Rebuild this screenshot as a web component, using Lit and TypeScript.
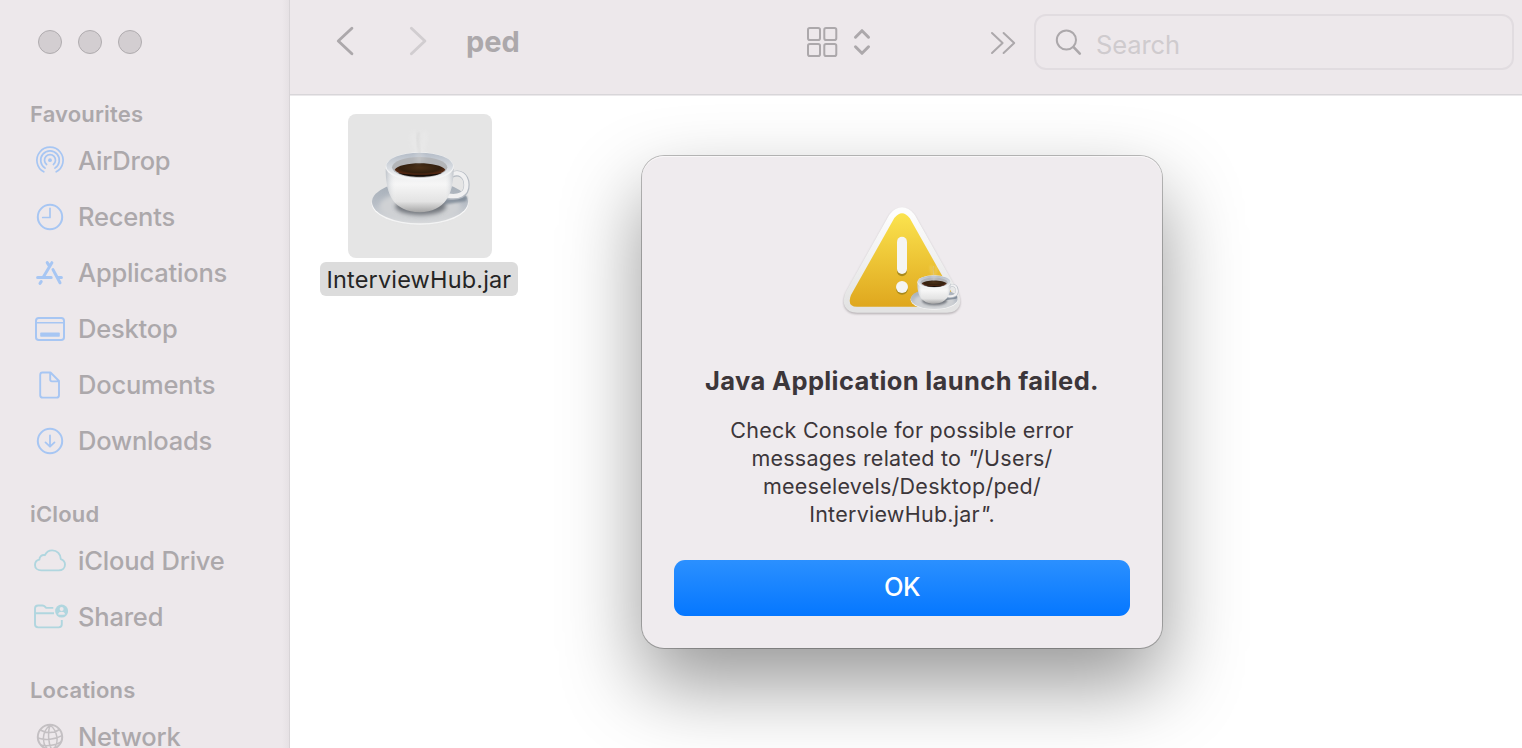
import { LitElement, html, css, svg } from "lit";
import { customElement } from "lit/decorators.js";

const cup = () => svg`
  <defs>
    <linearGradient id="saucer" x1="0" y1="0" x2="0" y2="1"><stop offset="0" stop-color="#a3acb6"/><stop offset=".55" stop-color="#b8bec6"/><stop offset="1" stop-color="#dcdddf"/></linearGradient>
    <linearGradient id="body" x1="0" y1="0" x2="0" y2="1"><stop offset="0" stop-color="#e6e7e9"/><stop offset=".35" stop-color="#f6f6f6"/><stop offset=".75" stop-color="#e3e3e3"/><stop offset="1" stop-color="#a5a5a5"/></linearGradient>
    <linearGradient id="side" x1="0" y1="0" x2="1" y2="0"><stop offset="0" stop-color="#8d97a3" stop-opacity=".45"/><stop offset=".16" stop-color="#fff" stop-opacity="0"/><stop offset=".86" stop-color="#fff" stop-opacity="0"/><stop offset="1" stop-color="#8d97a3" stop-opacity=".45"/></linearGradient>
    <linearGradient id="rim" x1="0" y1="0" x2="0" y2="1"><stop offset="0" stop-color="#b4bcc7"/><stop offset=".6" stop-color="#d9dde2"/><stop offset="1" stop-color="#fafafa"/></linearGradient>
    <radialGradient id="coffee" cx=".5" cy=".35" r=".55"><stop offset="0" stop-color="#4b3017"/><stop offset=".7" stop-color="#33200f"/><stop offset="1" stop-color="#5a2a14"/></radialGradient>
    <filter id="soft" x="-50%" y="-50%" width="200%" height="200%"><feGaussianBlur stdDeviation="6"/></filter>
    <filter id="softer" x="-50%" y="-50%" width="200%" height="200%"><feGaussianBlur stdDeviation="3"/></filter>
  </defs>
  <ellipse cx="330" cy="310" rx="145" ry="64" fill="#fafafa"/>
  <ellipse cx="330" cy="306" rx="144" ry="64" fill="url(#saucer)"/>
  <ellipse cx="330" cy="319" rx="122" ry="46" fill="#cfd1d4" filter="url(#soft)"/>
  <path d="M340 302L470 288Q474 298 466 304L400 314Z" fill="#75818f" opacity=".75" filter="url(#softer)"/>
  <ellipse cx="332" cy="319" rx="76" ry="26" fill="#5d6269" opacity=".8" filter="url(#soft)"/>
  <path d="M424 225C448 213 469 226 470 254C471 286 444 294 414 289" fill="none" stroke="#b4bac2" stroke-width="18"/>
  <path d="M424 224C448 212 468 226 469 254C470 284 444 292 414 287" fill="none" stroke="#f0f0f1" stroke-width="13"/>
  <path d="M227 207C227 285 250 334 329 337C406 334 430 285 431 207Z" fill="url(#body)"/>
  <path d="M227 207C227 285 250 334 329 337C406 334 430 285 431 207Z" fill="url(#side)"/>
  <ellipse cx="329" cy="200" rx="102" ry="43" fill="#f3f4f5"/>
  <ellipse cx="329" cy="198" rx="100" ry="40" fill="url(#rim)"/>
  <ellipse cx="329" cy="202" rx="83" ry="31" fill="#b3b5b8"/>
  <path d="M254 209C268 183 390 183 406 209C390 235 270 235 254 209Z" fill="url(#coffee)"/>
  <path d="M264 218C300 226 360 226 396 218C370 234 290 234 264 218Z" fill="#140d08"/>
  <g fill="none" stroke="#fff" opacity=".16" filter="url(#soft)"><path d="M312 100C300 125 330 145 322 186" stroke-width="14"/><path d="M342 100C352 125 325 145 338 178" stroke-width="14"/></g>
  <path d="M325 100C316 128 334 148 328 186" fill="none" stroke="#cccccc" stroke-width="6" opacity=".4" filter="url(#softer)"/>`;

const icons: Record<string, unknown> = {
  airdrop: svg`<g transform="translate(18 17.2)"><circle r="1.9" fill="currentColor" stroke="none"/><path d="M-6.2 11.6A13.1 13.1 0 1 1 6.2 11.6M-4.9 7.9A9.3 9.3 0 1 1 4.9 7.9M-3.4 4.3A5.5 5.5 0 1 1 3.4 4.3" stroke-width="1.7"/></g>`,
  recents: svg`<circle cx="18" cy="18" r="12.2"/><path d="M18 9.3V18.5H10.7" stroke-width="1.7"/>`,
  applications: svg`<path d="M19.9 7.7L11.2 22.2M15.2 7.6L17.6 11.4M21 14.6L28 27.8M5.6 22.5H19.2M25.6 22.5H29.4M9.2 26.6L8 28.4" stroke-width="3"/>`,
  desktop: svg`<rect x="4" y="7" width="28" height="22" rx="2.8"/><path d="M4 11.8H32" stroke-width="1.6"/><rect x="8.2" y="21.6" width="19.6" height="4.2" rx=".8" fill="currentColor" stroke="none"/>`,
  documents: svg`<path d="M10.5 5.5H18.5L27 14V28.2Q27 30.6 24.6 30.6H10.8Q8.2 30.6 8.2 28.2V7.9Q8.2 5.5 10.5 5.5ZM18.2 6V12.6Q18.2 14.4 20 14.4H26.6" stroke-width="1.9"/>`,
  downloads: svg`<circle cx="18" cy="18" r="12.2"/><path d="M18 12.5V23.3M13.5 19.4L18 23.7L22.5 19.4" stroke-width="1.8"/>`,
  cloud: svg`<path d="M9.4 27.4C5.6 27.4 3 25.1 3 21.9C3 19.2 4.8 17.1 7.4 16.6C7.3 13.6 10 11.4 12.9 12.2C14.3 9.2 17 7.4 20.2 7.4C25.2 7.4 28.7 11.2 28.8 16.1C31.3 16.9 33 19 33 21.6C33 25 30.4 27.4 26.8 27.4Z" stroke-width="1.9"/>`,
  shared: svg`<path d="M21.3 8.9H14.4L12.2 7.1Q11.4 6.5 10.2 6.5H6.2Q3 6.5 3 9.5V25.3Q3 28.4 6.2 28.4H26.6Q29.8 28.4 29.8 25.3V20.9M3 14.2H22" stroke-width="1.9" stroke-linecap="butt"/><circle cx="29.6" cy="12.1" r="6.5" fill="currentColor" stroke="none"/><circle cx="29.6" cy="10.1" r="2" fill="#ede8eb" stroke="none"/><path d="M25.9 15.2Q26.8 12.8 29.6 12.8T33.3 15.2Q29.6 16.4 25.9 15.2Z" fill="#ede8eb" stroke="none"/>`,
  network: svg`<circle cx="18" cy="18" r="12.2"/><path d="M18 6C9.7 13 9.7 24 15.5 30M18 6C15.5 14 16.5 25 19.5 30M18 6C26 12 27 24 22 29.5M8.3 11C14 14.5 22 14.5 27.5 10.4M6 19C13 21.5 23 20.5 30 16.6M9 26.2C15 27.2 24 26.5 28.5 23" stroke-width="1.5"/>`,
};

const sections = [
  { title: "Favourites", tint: "blue", items: [["airdrop", "AirDrop"], ["recents", "Recents"], ["applications", "Applications"], ["desktop", "Desktop"], ["documents", "Documents"], ["downloads", "Downloads"]] },
  { title: "iCloud", tint: "teal", items: [["cloud", "iCloud Drive"], ["shared", "Shared"]] },
  { title: "Locations", tint: "grey", items: [["network", "Network"]] },
];

@customElement("app-root")
export class AppRoot extends LitElement {
  static styles = css`
    :host { display: grid; grid-template-columns: 290px 1fr; position: relative; width: 100%; height: 748px; overflow: hidden; background: #fff; font-family: Inter, "Liberation Sans", sans-serif; }
    svg { display: block; flex: none; fill: none; stroke: currentColor; stroke-width: 2; stroke-linecap: round; stroke-linejoin: round; }
    .sidebar { box-sizing: border-box; height: 748px; overflow: hidden; background: linear-gradient(90deg, #ede8eb 282px, #e6e1e4 289px); border-right: 1px solid #d8d4d7; color: #aca8ab; }
    .lights { display: flex; gap: 16px; padding: 30px 38px 41px; }
    .light { box-sizing: border-box; width: 24px; height: 24px; border-radius: 50%; background: #d3ced1; border: 1px solid #b0acaf; }
    .section { margin-bottom: 26px; }
    .heading { height: 38px; line-height: 38px; padding-left: 30px; font-size: 22px; font-weight: 600; letter-spacing: 0.17px; }
    .item { display: flex; align-items: center; height: 56px; padding-left: 32px; gap: 10px; font-size: 25.5px; font-weight: 500; letter-spacing: -0.2px; white-space: nowrap; }
    .label { line-height: 30px; }
    .blue svg { color: #a7c6f3; }
    .teal svg { color: #b0d6df; }
    .grey svg { color: #c4c0c3; }
    .toolbar { box-sizing: border-box; display: flex; align-items: flex-start; height: 96px; background: #ede8eb; border-bottom: 1px solid #ebe9eb; box-shadow: inset 0 -1px #d8d6d9; padding-right: 8px; color: #aca8ab; }
    .back { margin-left: 40px; }
    .forward { margin-left: 30px; color: #d1cdd0; }
    .title { width: 326px; margin-left: 36px; line-height: 84px; font-size: 29px; font-weight: 700; }
    .view { margin-left: 10px; }
    .more { margin-left: 108px; }
    .search { box-sizing: border-box; flex: 1; display: flex; align-items: center; gap: 10px; height: 56px; margin: 14px 0 0 14px; padding-left: 16px; border: 2px solid #e1dce0; border-radius: 12px; font-size: 25.5px; color: #cfcbce; }
    .search svg { color: #aca8ab; }
    .placeholder { padding-top: 4px; letter-spacing: -0.1px; }
    .file { display: flex; flex-direction: column; align-items: center; width: 198px; margin: 18px 0 0 30px; gap: 4px; }
    .tile { width: 144px; height: 144px; margin-left: 2px; border-radius: 8px; background: #e5e5e5; }
    .tile svg, .alert svg { stroke: none; }
    .name { width: 198px; height: 34px; line-height: 35px; text-align: center; border-radius: 6px; background: #dcdcdc; color: #252525; font-size: 23.5px; letter-spacing: 0.16px; }
    .alert { position: absolute; left: 642px; top: 156px; box-sizing: border-box; width: 520px; height: 492px; padding: 34px 32px 32px; display: flex; flex-direction: column; align-items: center; border-radius: 22px; background: #efebee; color: #3c363a; box-shadow: 0 0 0 1px rgba(0,0,0,.25), inset 0 1px #f9f7f8, 0 36px 80px rgba(0,0,0,.41); text-align: center; }
    .badge { margin-left: 6px; }
    .alert-title { margin-top: 32px; height: 38px; line-height: 38px; font-size: 25.5px; font-weight: 700; letter-spacing: 0.37px; white-space: nowrap; }
    .message { margin-top: 16px; font-size: 21.5px; line-height: 28px; letter-spacing: 0.25px; white-space: nowrap; }
    .quote { font-style: italic; letter-spacing: -1.5px; }
    .ok { width: 456px; height: 56px; margin-top: auto; border: 0; padding: 0 0 3px; border-radius: 11px; background: linear-gradient(#2b90ff, #0577ff); color: #fff; font: 500 25.5px Inter, sans-serif; letter-spacing: -0.5px; }
  `;
  render() {
    return html`
      <nav class="sidebar">
        <div class="lights"><span class="light"></span><span class="light"></span><span class="light"></span></div>
        ${sections.map((s) => html`<div class="section ${s.tint}"><div class="heading">${s.title}</div>
          ${s.items.map(([icon, label]) => html`<div class="item"><svg width="36" height="36">${icons[icon]}</svg><span class="label">${label}</span></div>`)}</div>`)}
      </nav>
      <main>
        <div class="toolbar">
          <svg class="back" width="30" height="84" viewBox="330 0 30 84"><path d="M351.9 28.3L338.3 41L351.9 53.7" stroke-width="2.9"/></svg>
          <svg class="forward" width="40" height="84" viewBox="390 0 40 84"><path d="M411.4 28.3L424.9 41L411.4 53.7" stroke-width="2.9"/></svg>
          <div class="title">ped</div>
          <svg class="view" width="80" height="84" viewBox="802 0 80 84"><g stroke-width="2"><rect x="808" y="28" width="12" height="12" rx="1.8"/><rect x="824.3" y="28" width="12" height="12" rx="1.8"/><rect x="808" y="44" width="12" height="12" rx="1.8"/><rect x="824.3" y="44" width="12" height="12" rx="1.8"/></g><path d="M855.5 37.2L862 30.7L868.5 37.2M855.5 46.8L862 53.3L868.5 46.8" stroke-width="3"/></svg>
          <svg class="more" width="30" height="84" viewBox="990 0 30 84"><path d="M992 33L1002.6 43L992 53M1003.6 33L1014.2 43L1003.6 53"/></svg>
          <div class="search"><svg width="34" height="52" viewBox="1052 16 34 52"><circle cx="1066.4" cy="40" r="9.6"/><path d="M1073.6 47.2L1079.8 53.6" stroke-width="2.6"/></svg><span class="placeholder">Search</span></div>
        </div>
        <div class="file">
          <div class="tile"><svg width="144" height="144" viewBox="114 42 432 432">${cup()}</svg></div>
          <div class="name">InterviewHub.jar</div>
        </div>
      </main>
      <section class="alert">
        <svg class="badge" width="170" height="140" viewBox="0 0 510 420">
          <defs>
            <linearGradient id="amber" x1="0" y1="0" x2="0" y2="1"><stop offset="0" stop-color="#fbe34e"/><stop offset="1" stop-color="#dfa71e"/></linearGradient>
            <linearGradient id="edge" x1="0" y1="0" x2="0" y2="1"><stop offset="0" stop-color="#fdfdfd"/><stop offset="1" stop-color="#e3e3e3"/></linearGradient>
          </defs>
          <path d="M223 84Q246 56 269 84L399 315Q412 350 381 350H111Q80 350 93 315Z" transform="translate(0 4)" fill="#8a8488" stroke="#8a8488" stroke-width="36" opacity=".6" filter="url(#softer)"/>
          <path d="M223 84Q246 56 269 84L399 315Q412 350 381 350H111Q80 350 93 315Z" fill="url(#edge)" stroke="url(#edge)" stroke-width="36"/>
          <path d="M223 84Q246 56 269 84L399 315Q412 350 381 350H111Q80 350 93 315Z" fill="url(#amber)"/>
          <g fill="#a98a1c" transform="translate(0 4)"><rect x="231" y="140" width="30" height="115" rx="15"/><circle cx="246" cy="292" r="18"/></g>
          <g fill="#f5f5f3"><rect x="231" y="140" width="30" height="112" rx="15"/><circle cx="246" cy="291" r="18"/></g>
          <g transform="translate(181 181.5) scale(.49 .475)">${cup()}</g>
        </svg>
        <div class="alert-title">Java Application launch failed.</div>
        <div class="message">Check Console for possible error<br>messages related to <span class="quote">"</span>/Users/<br>meeselevels/Desktop/ped/<br>InterviewHub.jar<span class="quote">"</span>.</div>
        <button class="ok">OK</button>
      </section>`;
  }
}
